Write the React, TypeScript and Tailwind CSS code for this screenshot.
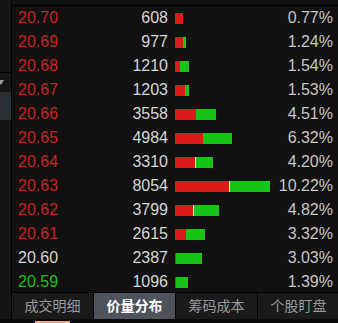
import React from "react";

interface Level {
  price: string;
  vol: number;
  red: number;
  sep?: boolean;
  green: number;
  pct: string;
  tone: "up" | "flat" | "down";
}

const levels: Level[] = [
  { price: "20.70", vol: 608, red: 8, green: 0, pct: "0.77%", tone: "up" },
  { price: "20.69", vol: 977, red: 8, green: 3, pct: "1.24%", tone: "up" },
  { price: "20.68", vol: 1210, red: 5, green: 9, pct: "1.54%", tone: "up" },
  { price: "20.67", vol: 1203, red: 10, green: 4, pct: "1.53%", tone: "up" },
  { price: "20.66", vol: 3558, red: 21, green: 20, pct: "4.51%", tone: "up" },
  { price: "20.65", vol: 4984, red: 28, green: 29, pct: "6.32%", tone: "up" },
  { price: "20.64", vol: 3310, red: 20, sep: true, green: 17, pct: "4.20%", tone: "up" },
  { price: "20.63", vol: 8054, red: 54, sep: true, green: 40, pct: "10.22%", tone: "up" },
  { price: "20.62", vol: 3799, red: 18, sep: true, green: 25, pct: "4.82%", tone: "up" },
  { price: "20.61", vol: 2615, red: 11, green: 19, pct: "3.32%", tone: "up" },
  { price: "20.60", vol: 2387, red: 1, green: 26, pct: "3.03%", tone: "flat" },
  { price: "20.59", vol: 1096, red: 1, green: 12, pct: "1.39%", tone: "down" },
];

const tabs = ["成交明细", "价量分布", "筹码成本", "个股盯盘"];

const toneClass = {
  up: "text-[#cc2222]",
  flat: "text-[#d4d4d4]",
  down: "text-[#20c020]",
};

function Row({ l }: { l: Level }) {
  return (
    <div className="flex h-[24px] shrink-0 items-center text-[16px]">
      <div className={`w-[66px] pl-[6px] ${toneClass[l.tone]}`}>{l.price}</div>
      <div className="w-[90px] text-right text-[#d6d6d6]">{l.vol}</div>
      <div className="ml-[7px] flex h-[11px] flex-1 items-stretch">
        {l.red > 0 && <div className="bg-[#dc1a1a]" style={{ width: l.red }} />}
        {l.sep && <div className="w-[1px] bg-[#e6e6e6]" />}
        {l.green > 0 && <div className="bg-[#18c418]" style={{ width: l.green }} />}
      </div>
      <div className="pr-[5px] text-right text-[#c6c6c6]">{l.pct}</div>
    </div>
  );
}

export default function App() {
  return (
    <div
      className="flex h-[323px] w-[338px] flex-col overflow-hidden bg-[#0b0b0b]"
      style={{ fontFamily: '"Liberation Sans", "Noto Sans CJK SC", sans-serif' }}
    >
      <div className="flex h-[319px]">
        {/* left side strip */}
        <div className="flex w-[12px] shrink-0 flex-col border-r border-black bg-[#151515]">
          <div className="h-[73px] border-b border-black" />
          <div className="flex h-[19px] items-center">
            <svg width="6" height="5" viewBox="0 0 6 5" className="-ml-[2px]">
              <path d="M0 0 H6 L3 5 Z" fill="#9a9a9a" />
            </svg>
          </div>
          <div className="h-[28px] bg-[#2c3037]" />
        </div>

        {/* main panel */}
        <div className="flex min-w-0 flex-1 flex-col bg-[#111111]">
          <div className="h-[6px] shrink-0 border-b border-black" />
          <div className="flex h-[286px] flex-col overflow-hidden">
            {levels.map((l) => (
              <Row key={l.price} l={l} />
            ))}
          </div>
          <div className="flex h-[27px] shrink-0 border-t border-black bg-[#1a1a1a] text-[14px]">
            {tabs.map((t, i) => (
              <div
                key={t}
                className={
                  i === 1
                    ? "flex w-[82px] shrink-0 items-center justify-center border-r border-black bg-[#4f545c] font-bold text-white"
                    : "flex w-[82px] shrink-0 items-center justify-center border-r border-black text-[#9c9c9c]"
                }
              >
                {t}
              </div>
            ))}
          </div>
        </div>
      </div>
      <div className="flex h-[4px] items-end">
        <div className="ml-[35px] h-[2px] w-[35px] bg-[#f0a282]" />
      </div>
    </div>
  );
}
